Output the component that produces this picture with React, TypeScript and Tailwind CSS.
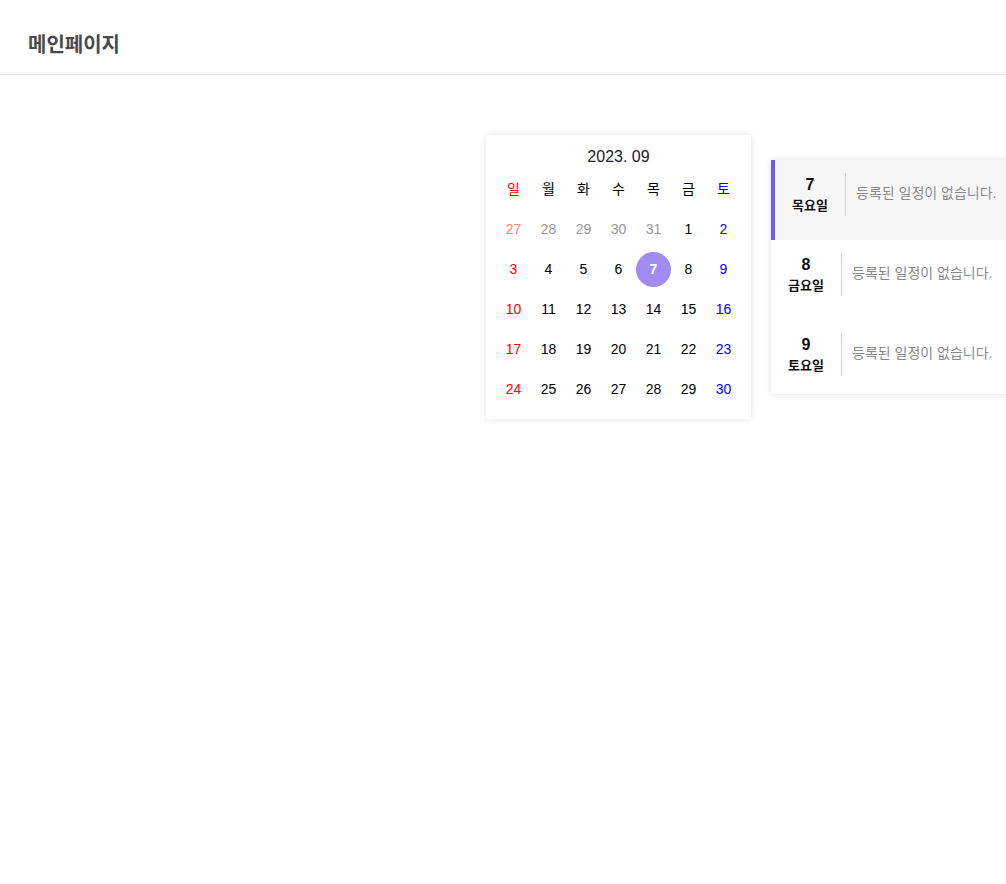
import React from "react";

const font = { fontFamily: '"Liberation Sans", "Noto Sans CJK KR", sans-serif' };

type Day = { d: number; cls: string; sel?: boolean };

const weeks: Day[][] = [
  [
    { d: 27, cls: "text-[#ff7f7f]" },
    { d: 28, cls: "text-[#999999]" },
    { d: 29, cls: "text-[#999999]" },
    { d: 30, cls: "text-[#999999]" },
    { d: 31, cls: "text-[#999999]" },
    { d: 1, cls: "text-black" },
    { d: 2, cls: "text-[#0000ff]" },
  ],
  [
    { d: 3, cls: "text-[#ff0000]" },
    { d: 4, cls: "text-black" },
    { d: 5, cls: "text-black" },
    { d: 6, cls: "text-black" },
    { d: 7, cls: "text-white font-bold", sel: true },
    { d: 8, cls: "text-black" },
    { d: 9, cls: "text-[#0000ff]" },
  ],
  [
    { d: 10, cls: "text-[#ff0000]" },
    { d: 11, cls: "text-black" },
    { d: 12, cls: "text-black" },
    { d: 13, cls: "text-black" },
    { d: 14, cls: "text-black" },
    { d: 15, cls: "text-black" },
    { d: 16, cls: "text-[#0000ff]" },
  ],
  [
    { d: 17, cls: "text-[#ff0000]" },
    { d: 18, cls: "text-black" },
    { d: 19, cls: "text-black" },
    { d: 20, cls: "text-black" },
    { d: 21, cls: "text-black" },
    { d: 22, cls: "text-black" },
    { d: 23, cls: "text-[#0000ff]" },
  ],
  [
    { d: 24, cls: "text-[#ff0000]" },
    { d: 25, cls: "text-black" },
    { d: 26, cls: "text-black" },
    { d: 27, cls: "text-black" },
    { d: 28, cls: "text-black" },
    { d: 29, cls: "text-black" },
    { d: 30, cls: "text-[#0000ff]" },
  ],
];

const weekdays = [
  { t: "일", cls: "text-[#ff0000]" },
  { t: "월", cls: "text-black" },
  { t: "화", cls: "text-black" },
  { t: "수", cls: "text-black" },
  { t: "목", cls: "text-black" },
  { t: "금", cls: "text-black" },
  { t: "토", cls: "text-[#0000ff]" },
];

const schedule = [
  { d: 7, w: "목요일", active: true },
  { d: 8, w: "금요일", active: false },
  { d: 9, w: "토요일", active: false },
];

export default function App() {
  return (
    <div className="w-[1006px] h-[884px] overflow-hidden bg-white" style={font}>
      <header className="h-[75px] border-b border-[#e6e6e6] flex items-start pl-[28px] pt-[32px]">
        <h1 className="text-[20px] leading-[26px] font-bold text-[#4a4a4a]">메인페이지</h1>
      </header>
      <main className="flex items-center pl-[486px] pt-[60px]">
        <div className="w-[265px] bg-white shadow-[0_0_6px_rgba(0,0,0,0.12)] px-[10px] pt-[10px] pb-[10px] shrink-0">
          <div className="h-[24px] flex items-center justify-center text-[16px] text-[#222]">2023. 09</div>
          <div className="grid grid-cols-7 h-[40px] items-center text-[14px]">
            {weekdays.map((w) => (
              <div key={w.t} className={`text-center ${w.cls}`}>{w.t}</div>
            ))}
          </div>
          {weeks.map((wk, i) => (
            <div key={i} className="grid grid-cols-7 h-[40px] items-center text-[14px]">
              {wk.map((day, j) => (
                <div key={j} className="flex items-center justify-center">
                  {day.sel ? (
                    <div className={`w-[35px] h-[35px] rounded-full bg-[#a18cf6] flex items-center justify-center ${day.cls}`}>
                      {day.d}
                    </div>
                  ) : (
                    <span className={day.cls}>{day.d}</span>
                  )}
                </div>
              ))}
            </div>
          ))}
        </div>
        <div className="ml-[20px] w-[260px] h-[234px] shrink-0 bg-white shadow-[0_0_6px_rgba(0,0,0,0.12)] overflow-hidden">
          {schedule.map((s) => (
            <div
              key={s.d}
              className={`h-[80px] flex items-start pt-[13px] ${
                s.active ? "bg-[#f7f7f7] border-l-4 border-[#7357f6]" : ""
              }`}
            >
              <div className="w-[70px] flex flex-col items-center pt-[1px]">
                <div className="h-[21px] leading-[21px] text-[16px] font-bold text-[#111]">{s.d}</div>
                <div className="h-[22px] leading-[22px] text-[13px] font-bold text-[#111]">{s.w}</div>
              </div>
              <div className="w-px h-[43px] bg-[#d6d6d6]" />
              <div className="ml-[10px] h-[43px] flex items-center text-[14px] text-[#8a8a8a] pb-[2px] whitespace-nowrap">
                등록된 일정이 없습니다.
              </div>
            </div>
          ))}
        </div>
      </main>
    </div>
  );
}
